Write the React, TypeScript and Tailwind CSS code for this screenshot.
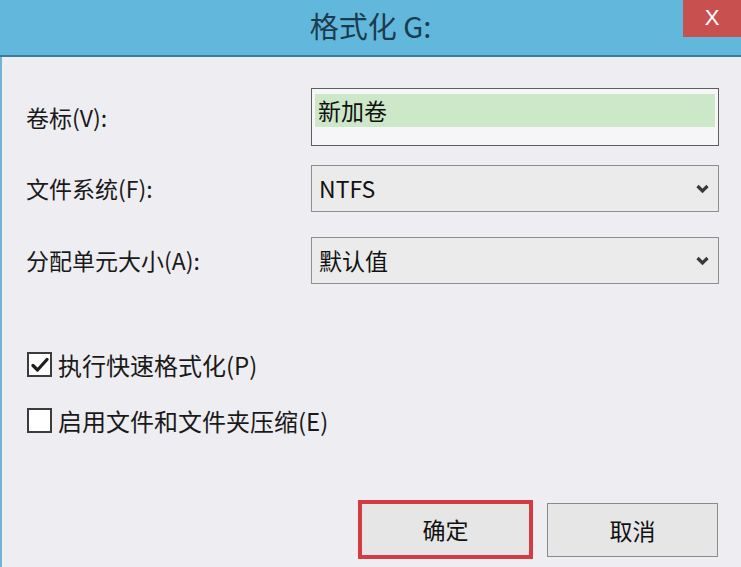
import React from "react";

const font = "font-['Noto_Sans_CJK_SC','Noto_Sans',sans-serif]";

const Chevron = () => (
  <svg width="13" height="10" viewBox="0 0 13 10">
    <polyline points="1.5,2 6.5,7 11.5,2" fill="none" stroke="#3a3a3a" strokeWidth="3.2" />
  </svg>
);

const CheckMark = () => (
  <svg width="18" height="16" viewBox="0 0 18 16">
    <path d="M2 8.5l4.5 4.5L16 2.5" fill="none" stroke="#1e1e1e" strokeWidth="3.2" strokeLinecap="round" strokeLinejoin="round" />
  </svg>
);

const Row = ({ label, children, className = "" }) => (
  <div className={`flex items-center ${className}`}>
    <div className="w-[285px] text-[23px] text-[#1a1a1a]">{label}</div>
    {children}
  </div>
);

const Select = ({ value }) => (
  <div className="w-[408px] h-[47px] border border-[#8e8e8e] bg-[#ebebeb] flex items-center justify-between pl-[7px] pr-[9px]">
    <span className="text-[23px] text-[#111]">{value}</span>
    <Chevron />
  </div>
);

const Checkbox = ({ checked, label, className = "" }) => (
  <div className={`flex items-center h-[25px] ${className}`}>
    <div className="w-[25px] h-[25px] border-2 border-[#3c3c3c] bg-white flex items-center justify-center">
      {checked && <CheckMark />}
    </div>
    <span className="ml-[6px] text-[24px] leading-none text-[#1a1a1a]">{label}</span>
  </div>
);

export default function App() {
  return (
    <div className={`w-[741px] h-[567px] overflow-hidden bg-[#eeedf1] flex flex-col ${font}`}>
      <div className="relative h-[57px] shrink-0 bg-[#62b8dc] border-b-2 border-[#3b7e98] flex items-center justify-center">
        <span className="text-[29px] text-[#1c3b4f] -mt-[3px]">格式化 G:</span>
        <div className="absolute right-0 top-0 w-[58px] h-[37px] bg-[#c8514f] flex items-center justify-center">
          <span className="text-white text-[22px] font-['Liberation_Sans',sans-serif] -mt-[2px]">X</span>
        </div>
      </div>
      <div className="flex-1 border-l-[2px] border-[#6fb3d8] pl-[24px]">
        <Row label="卷标(V):" className="mt-[31px]">
          <div className="w-[408px] h-[58px] border-[1.5px] border-[#5e5e5e] bg-[#f6f5f8] pt-[5px] px-[3px]">
            <div className="h-[33px] bg-[#cde8c9] flex items-center pl-[3px]">
              <span className="text-[23px] text-[#111]">新加卷</span>
            </div>
          </div>
        </Row>
        <Row label="文件系统(F):" className="mt-[19px]">
          <Select value="NTFS" />
        </Row>
        <Row label="分配单元大小(A):" className="mt-[25px]">
          <Select value="默认值" />
        </Row>
        <Checkbox checked label="执行快速格式化(P)" className="mt-[68px] ml-[1px]" />
        <Checkbox label="启用文件和文件夹压缩(E)" className="mt-[31px] ml-[1px]" />
        <div className="flex items-start mt-[67px] pl-[332px]">
          <div className="w-[175px] h-[59px] border-4 border-[#d43c42] bg-[#e6e6e6] flex items-center justify-center">
            <span className="text-[23px] text-[#111]">确定</span>
          </div>
          <div className="ml-[14px] mt-[3px] w-[171px] h-[54px] border border-[#8a8a8a] bg-[#e6e6e6] flex items-center justify-center">
            <span className="text-[23px] text-[#111]">取消</span>
          </div>
        </div>
      </div>
    </div>
  );
}
